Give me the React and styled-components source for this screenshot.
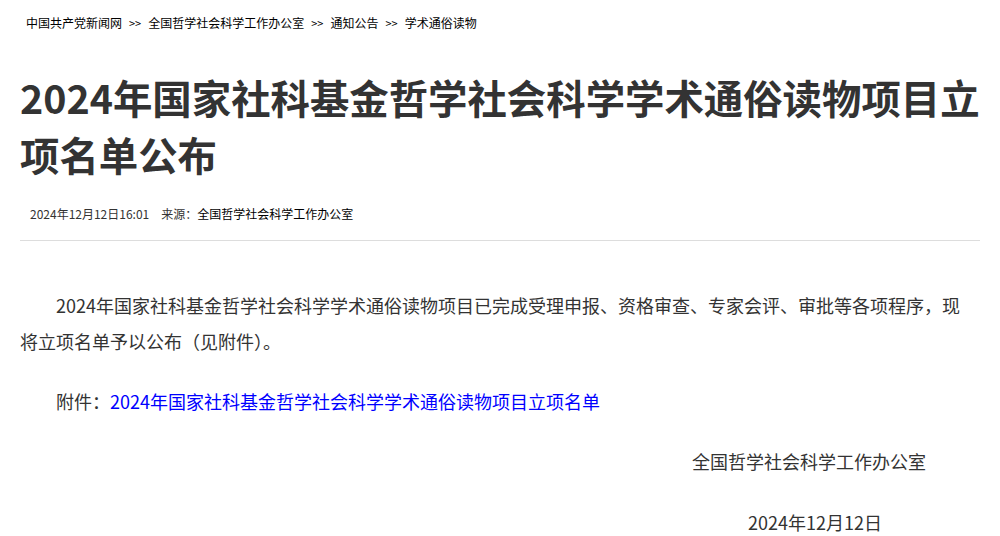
import React from "react";
import { styled, createGlobalStyle } from "styled-components";

const GlobalStyle = createGlobalStyle`
  body {
    margin: 0;
    background: #fff;
    font-family: "Noto Sans CJK SC", "Noto Sans", sans-serif;
    color: #333;
  }
`;

const crumbs = ["中国共产党新闻网", "全国哲学社会科学工作办公室", "通知公告", "学术通俗读物"];

const App = () => {
  return (
    <>
      <GlobalStyle />
      <Page>
        <Breadcrumb>
          {crumbs.map((c, i) => (
            <React.Fragment key={c}>
              {i > 0 && <Sep>&gt;&gt;</Sep>}
              <Crumb href="#">{c}</Crumb>
            </React.Fragment>
          ))}
        </Breadcrumb>
        <Title>2024年国家社科基金哲学社会科学学术通俗读物项目立项名单公布</Title>
        <Meta>
          <span>2024年12月12日16:01</span>
          <Source>来源：<a href="#">全国哲学社会科学工作办公室</a></Source>
        </Meta>
        <Body>
          <Para>
            2024年国家社科基金哲学社会科学学术通俗读物项目已完成受理申报、资格审查、专家会评、审批等各项程序，现将立项名单予以公布（见附件）。
          </Para>
          <Para>
            附件：<Link href="#">2024年国家社科基金哲学社会科学学术通俗读物项目立项名单</Link>
          </Para>
          <Sign $right={42}>全国哲学社会科学工作办公室</Sign>
          <Sign $right={86}>2024年12月12日</Sign>
        </Body>
      </Page>
    </>
  );
};

export default App;

const Page = styled.div`
  padding: 0 20px;
`;

const Breadcrumb = styled.div`
  padding: 14px 0 0 6px;
  font-size: 12px;
  line-height: 18px;
  color: #000;
`;

const Crumb = styled.a`
  color: #000;
  text-decoration: none;
`;

const Sep = styled.span`
  margin: 0 7px;
  font-size: 11px;
`;

const Title = styled.h1`
  margin: 36px 0 0;
  font-size: 39.4px;
  line-height: 57px;
  font-weight: 700;
  color: #333;
`;

const Meta = styled.div`
  display: flex;
  gap: 12px;
  margin-top: 23px;
  padding: 0 0 17px 10px;
  font-size: 12px;
  line-height: 18px;
  color: #333;
  border-bottom: 1px solid #ddd;
`;

const Source = styled.span`
  a {
    color: #000;
    text-decoration: none;
  }
`;

const Body = styled.div`
  padding: 46px 12px 0 0;
  font-size: 18px;
  line-height: 36px;
  color: #333;
`;

const Para = styled.p`
  margin: 0 0 24px;
  text-indent: 2em;
`;

const Link = styled.a`
  color: #0000ff;
  text-decoration: none;
`;

const Sign = styled.p`
  margin: 0 0 25px;
  text-align: right;
  padding-right: ${(p) => p.$right}px;

  &:last-child {
    margin-bottom: 0;
  }
`;
